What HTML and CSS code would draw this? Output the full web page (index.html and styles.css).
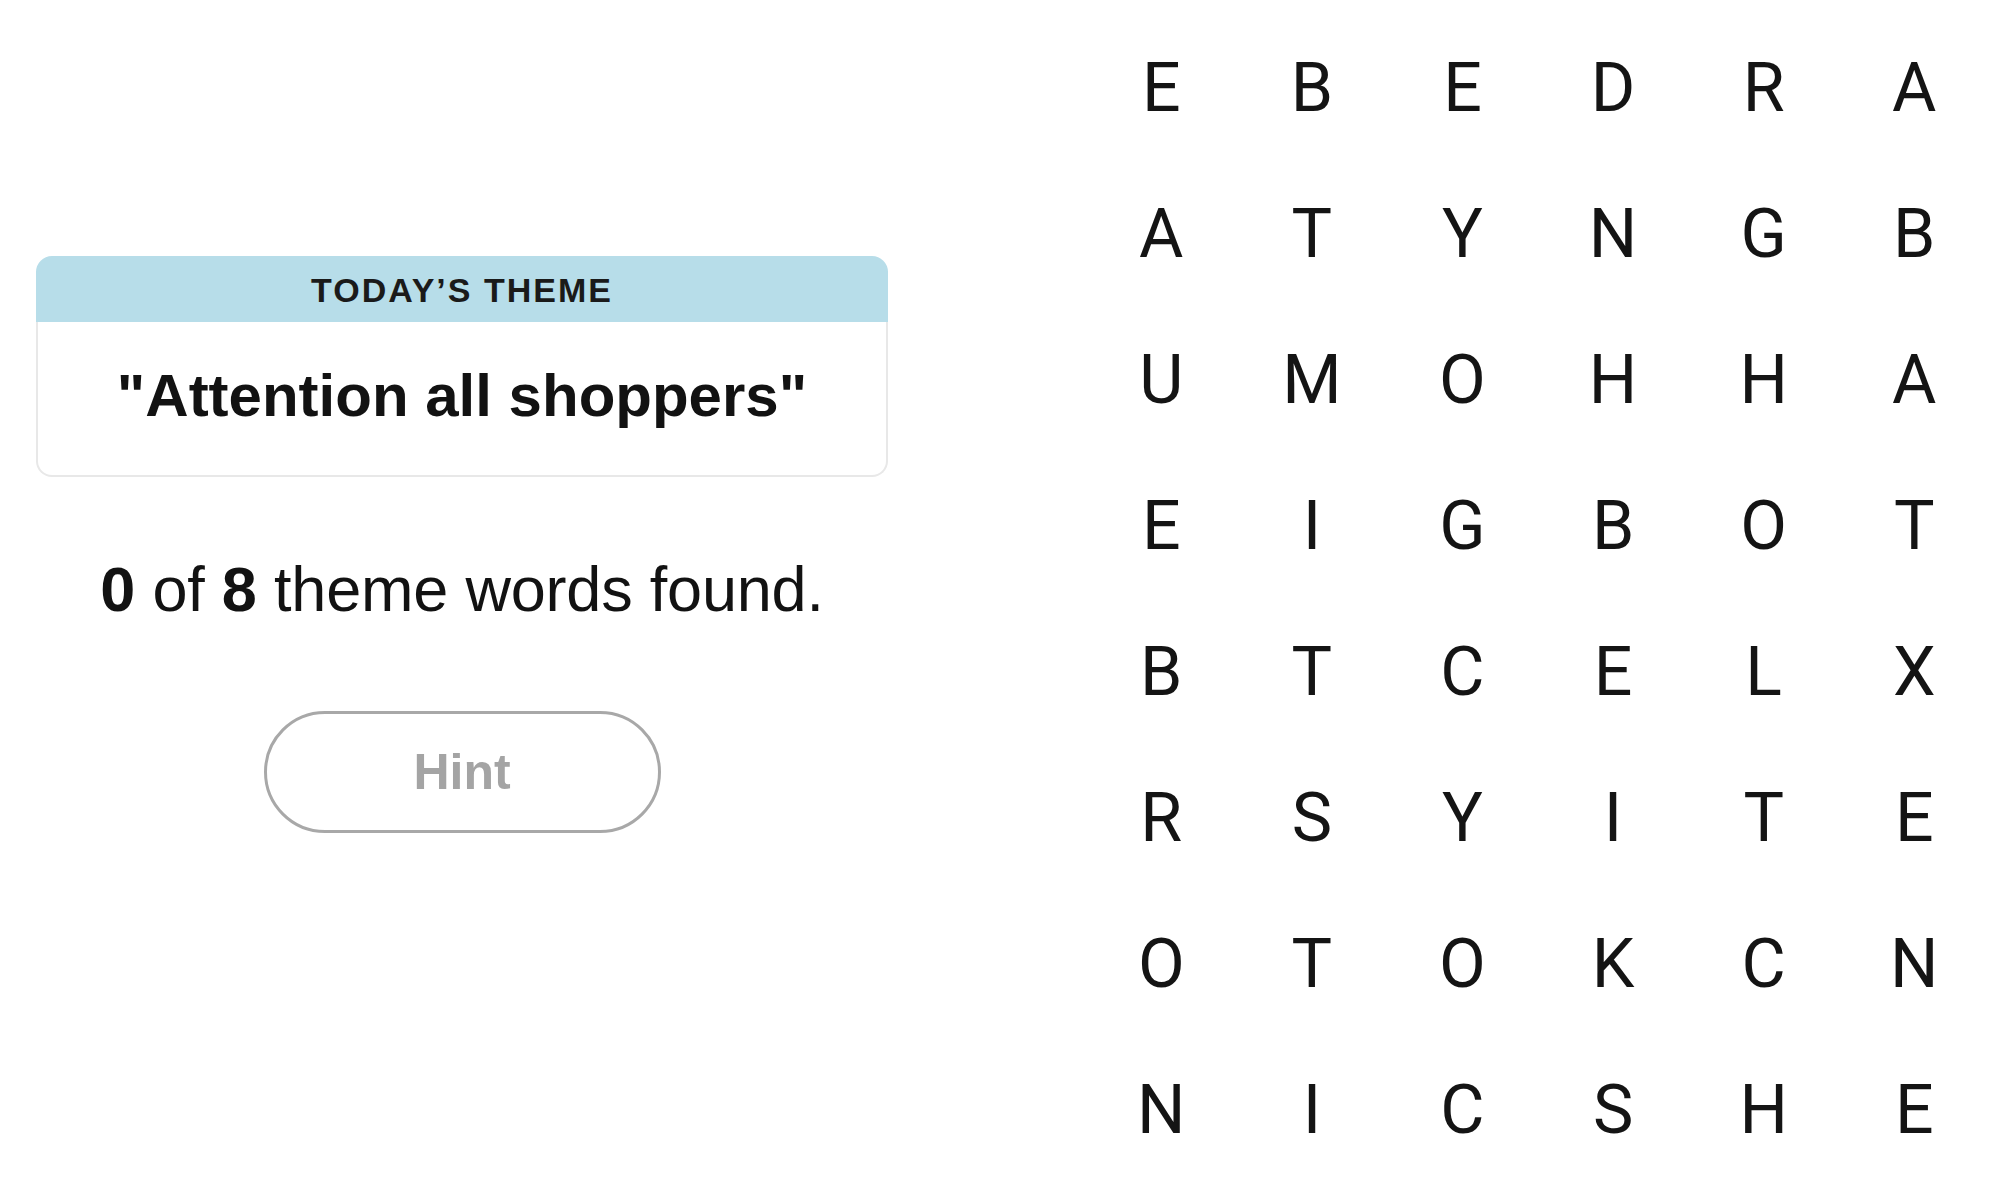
FILE: index.html
```html
<!DOCTYPE html>
<html lang="en">
<head>
<meta charset="utf-8">
<title>Strands</title>
<link rel="stylesheet" href="styles.css">
</head>
<body>
<main class="page">
  <section class="side">
    <div class="card">
      <div class="card-head">TODAY’S THEME</div>
      <div class="card-body">"Attention all shoppers"</div>
    </div>
    <p class="found"><b>0</b> of <b>8</b> theme words found.</p>
    <button class="hint" type="button">Hint</button>
  </section>
  <section class="board">
    <span>E</span><span>B</span><span>E</span><span>D</span><span>R</span><span>A</span>
    <span>A</span><span>T</span><span>Y</span><span>N</span><span>G</span><span>B</span>
    <span>U</span><span>M</span><span>O</span><span>H</span><span>H</span><span>A</span>
    <span>E</span><span>I</span><span>G</span><span>B</span><span>O</span><span>T</span>
    <span>B</span><span>T</span><span>C</span><span>E</span><span>L</span><span>X</span>
    <span>R</span><span>S</span><span>Y</span><span>I</span><span>T</span><span>E</span>
    <span>O</span><span>T</span><span>O</span><span>K</span><span>C</span><span>N</span>
    <span>N</span><span>I</span><span>C</span><span>S</span><span>H</span><span>E</span>
  </section>
</main>
</body>
</html>
```

FILE: styles.css
```css
html, body {
  margin: 0;
  padding: 0;
  background: #ffffff;
}

body {
  width: 2000px;
  height: 1198px;
  overflow: hidden;
  font-family: "Liberation Sans", Arial, sans-serif;
  color: #121212;
}

.page {
  display: flex;
  align-items: flex-start;
}

.side {
  width: 852px;
  padding: 256px 36px 0;
  display: flex;
  flex-direction: column;
  align-items: center;
}

.card {
  width: 100%;
  text-align: center;
}

.card-head {
  height: 66px;
  line-height: 68px;
  background: #b7dde9;
  border-radius: 16px 16px 0 0;
  font-size: 34px;
  font-weight: 700;
  letter-spacing: 2px;
  color: #1a1a1a;
}

.card-body {
  border: 2px solid #e8e8e8;
  border-top: none;
  border-radius: 0 0 16px 16px;
  padding: 44px 0 50px;
  font-size: 60px;
  line-height: 59px;
  font-weight: 700;
}

.found {
  margin: 81px 0 0;
  font-size: 63px;
  line-height: 62px;
  font-weight: 400;
  text-align: center;
  letter-spacing: -0.2px;
}

.found b {
  font-weight: 700;
}

.hint {
  margin-top: 91px;
  width: 397px;
  height: 122px;
  box-sizing: border-box;
  border: 3px solid #a8a8a8;
  border-radius: 61px;
  background: #ffffff;
  font-family: "Liberation Sans", Arial, sans-serif;
  font-size: 50px;
  font-weight: 700;
  color: #a4a4a4;
  padding: 0;
}

.board {
  margin-left: 162px;
  padding-top: 15px;
  display: grid;
  grid-template-columns: repeat(6, 150.6px);
  grid-template-rows: repeat(8, 146px);
  font-family: Roboto, "Liberation Sans", sans-serif;
  font-size: 68px;
  font-weight: 400;
  color: #141414;
}

.board span {
  display: flex;
  align-items: center;
  justify-content: center;
  line-height: 148px;
}
```
